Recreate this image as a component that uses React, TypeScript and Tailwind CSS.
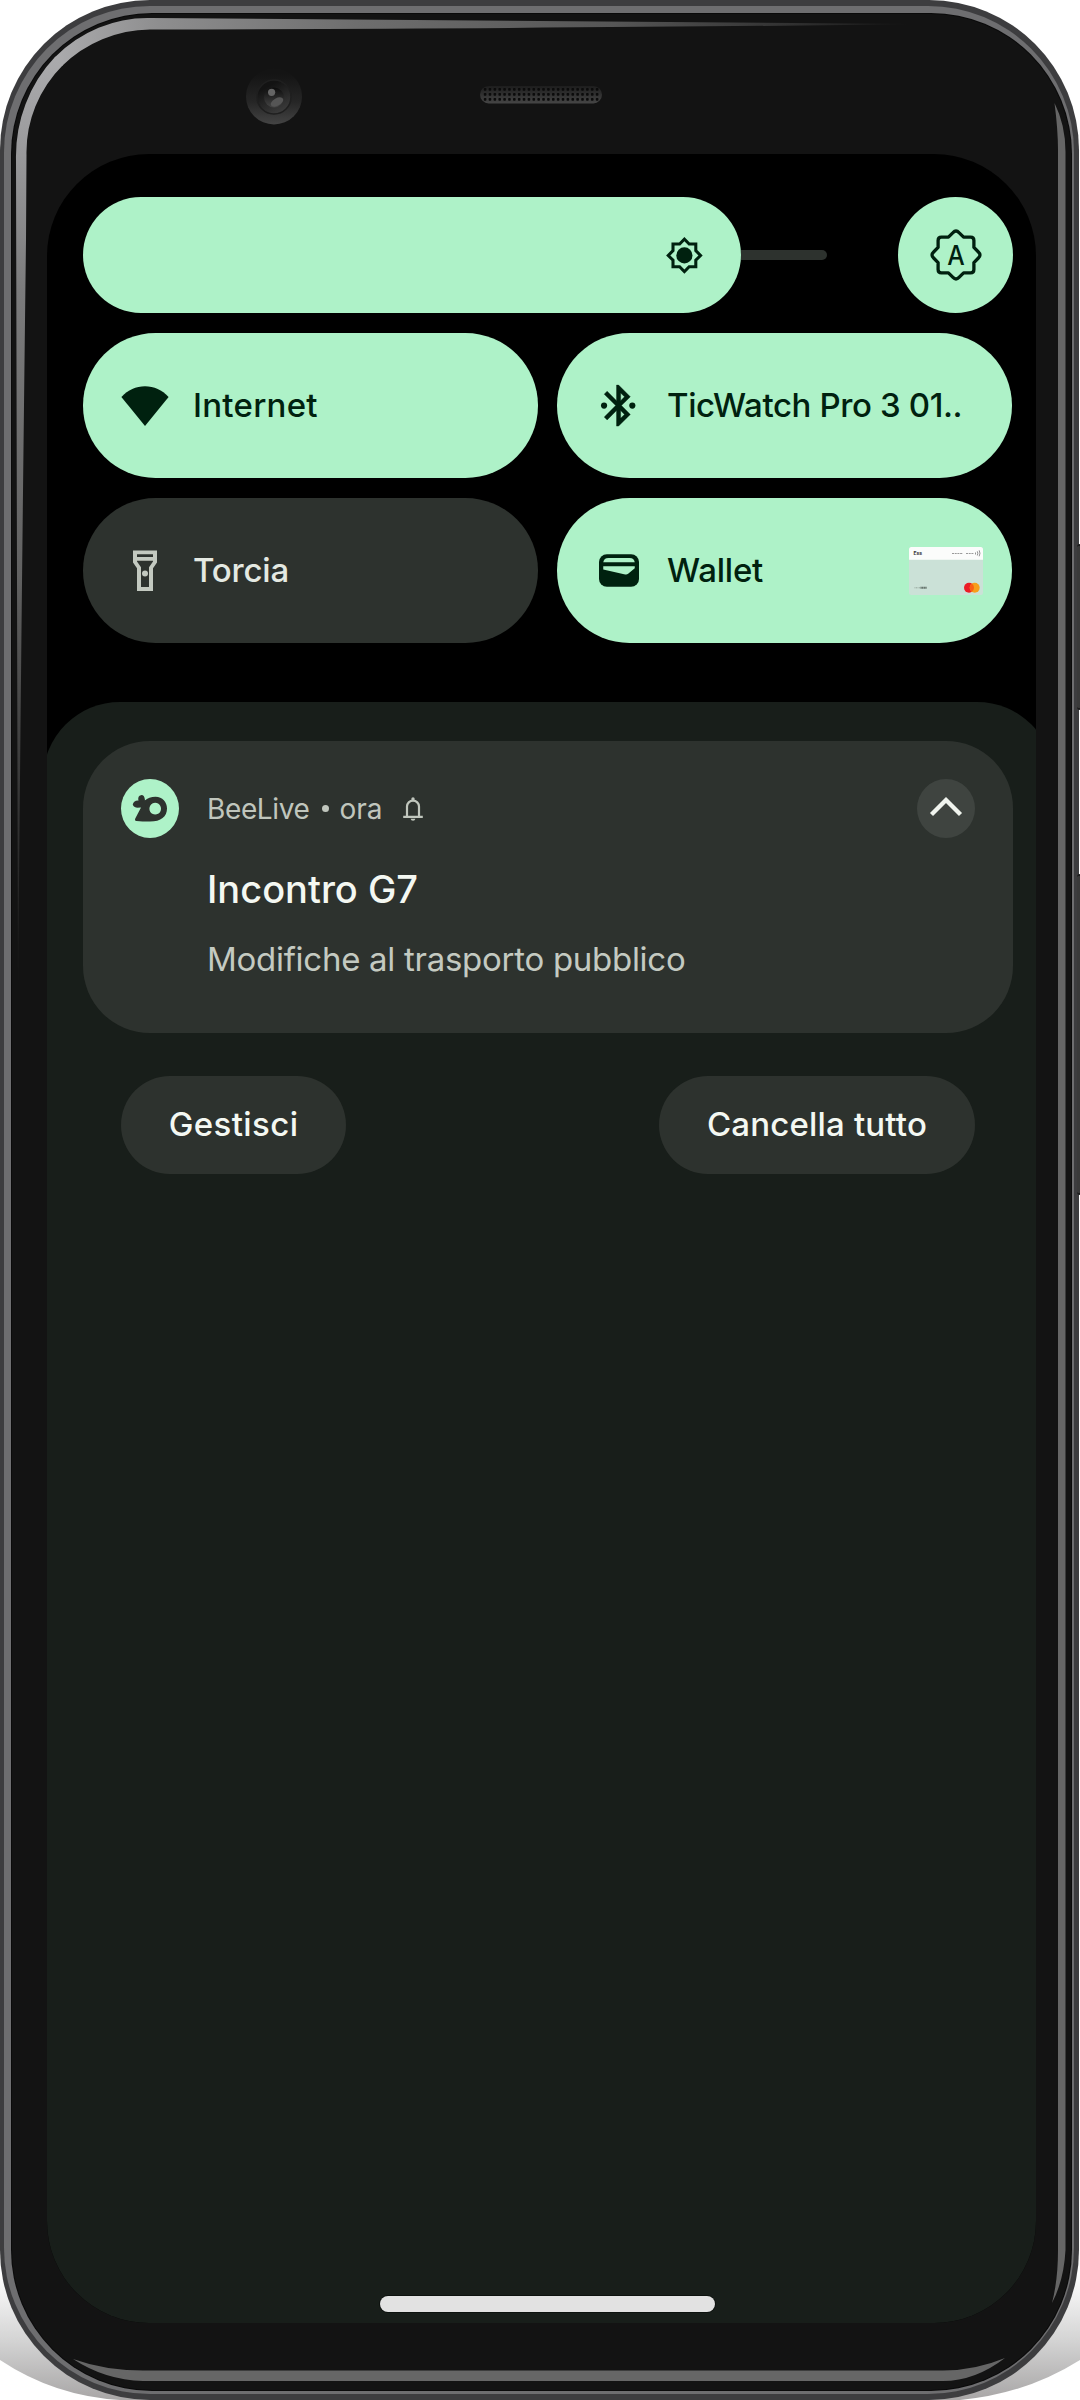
import React from "react";

function Glints() {
  return (
    <svg className="pointer-events-none absolute inset-0" width="1080" height="2400" viewBox="0 0 1080 2400" aria-hidden="true">
      <defs>
        <linearGradient id="glintTop" gradientUnits="userSpaceOnUse" x1="55" y1="0" x2="915" y2="0">
          <stop offset="0" stopColor="#ababad" />
          <stop offset="0.12" stopColor="#8e8e8f" />
          <stop offset="0.35" stopColor="#6e6e6e" />
          <stop offset="0.65" stopColor="#565656" />
          <stop offset="0.85" stopColor="#323232" />
          <stop offset="1" stopColor="#131313" />
        </linearGradient>
        <linearGradient id="glintLeft" gradientUnits="userSpaceOnUse" x1="0" y1="55" x2="0" y2="1000">
          <stop offset="0" stopColor="#ababad" />
          <stop offset="0.1" stopColor="#9a9a9c" />
          <stop offset="0.25" stopColor="#7b7b7c" />
          <stop offset="0.55" stopColor="#626262" />
          <stop offset="0.75" stopColor="#3c3c3c" />
          <stop offset="1" stopColor="#131313" />
        </linearGradient>
      </defs>
      <path d="M54.6 57.4A134 141 0 0 1 150 18L920 24Q640 28 150 29.5A126 124 0 0 0 62 66Z" fill="url(#glintTop)" />
      <path d="M55.4 56.6A134 141 0 0 0 16 160L18 1000Q21 640 26 240L26.5 155A126 124 0 0 1 63 65Z" fill="url(#glintLeft)" />
      <path d="M1054.5 103Q1065.5 125 1065.5 152V2250Q1064 2280 1052 2303Q1058 2280 1058 2250V150Q1058 130 1054.5 103Z" fill="#666666" />
      <path d="M73 2359Q105 2370.5 143 2370.5H943Q975 2370.5 1005 2358Q975 2381 943 2381H143Q105 2380 73 2359Z" fill="#666666" />
    </svg>
  );
}

function FloorShadow() {
  return (
    <svg className="absolute bottom-0 left-0" width="1080" height="150" viewBox="0 2250 1080 150" aria-hidden="true">
      <defs>
        <linearGradient id="floor" x1="0" y1="0" x2="0" y2="1">
          <stop offset="0.15" stopColor="#ffffff" />
          <stop offset="0.6" stopColor="#d4d4d4" />
          <stop offset="1" stopColor="#a8a6a6" />
        </linearGradient>
      </defs>
      <path d="M0 2250V2360Q54 2396 120 2400H960Q1026 2394 1080 2360V2250Z" fill="url(#floor)" />
    </svg>
  );
}

function Camera() {
  return (
    <svg width="56" height="57" viewBox="0 0 56 57" aria-hidden="true">
      <defs>
        <linearGradient id="lensOuter" x1="0" y1="0" x2="0" y2="1">
          <stop offset="0.1" stopColor="#141414" />
          <stop offset="0.6" stopColor="#262626" />
          <stop offset="1" stopColor="#444444" />
        </linearGradient>
        <linearGradient id="lensRing" x1="0.2" y1="0" x2="0.7" y2="1">
          <stop offset="0.2" stopColor="#131313" />
          <stop offset="1" stopColor="#3d3d3d" />
        </linearGradient>
        <linearGradient id="lensCore" x1="0" y1="0" x2="0" y2="1">
          <stop offset="0" stopColor="#0c0c0c" />
          <stop offset="1" stopColor="#454545" />
        </linearGradient>
      </defs>
      <circle cx="28" cy="28.5" r="28" fill="url(#lensOuter)" />
      <circle cx="28" cy="29" r="17" fill="url(#lensRing)" stroke="#1f1f1f" strokeWidth="1.5" />
      <circle cx="28" cy="29.5" r="10" fill="url(#lensCore)" />
      <ellipse cx="31" cy="34" rx="6.8" ry="3.8" fill="#555555" transform="rotate(-28 31 34)" />
      <circle cx="25.6" cy="24.3" r="3.6" fill="#656565" />
    </svg>
  );
}

function Speaker() {
  const columns = Array.from({ length: 24 }, (_, i) => i);
  const rows = [3.4, 8.4, 13.4];
  return (
    <svg width="122" height="18" viewBox="0 0 122 18" aria-hidden="true">
      <defs>
        <linearGradient id="grille" x1="0" y1="0" x2="0" y2="1">
          <stop offset="0" stopColor="#1d1d1d" />
          <stop offset="1" stopColor="#454545" />
        </linearGradient>
      </defs>
      <rect width="122" height="17.4" rx="8.7" fill="url(#grille)" />
      {rows.map((y) =>
        columns.map((c) => <rect key={`${y}-${c}`} x={3.8 + c * 4.87} y={y - 1.4} width="2.6" height="2.8" rx="0.8" fill="#0b0b0b" />),
      )}
    </svg>
  );
}

function BrightnessIcon() {
  return (
    <svg width="38.8" height="38.8" viewBox="0 0 24 24" fill="#00210f" aria-hidden="true">
      <path fillRule="evenodd" d="M20 8.69V4h-4.69L12 .69 8.69 4H4v4.69L.69 12 4 15.31V20h4.69L12 23.31 15.31 20H20v-4.69L23.31 12 20 8.69zm-1.9 5.87v3.54h-3.54L12 20.7l-2.56-2.6H5.900v-3.540L3.300 12l2.600-2.560V5.900h3.540L12 3.300l2.560 2.600h3.540v3.540l2.600 2.560-2.600 2.560z" />
      <circle cx="12" cy="12" r="5" />
    </svg>
  );
}

function AutoBrightnessIcon() {
  return (
    <svg width="54" height="54" viewBox="-27 -27 54 54" aria-hidden="true">
      <path
        d="M-3 -22.4Q0 -25.6 3 -22.4L7.6 -17.9H14.6Q17.9 -17.9 17.9 -14.6V-7.6L22.4 -3Q25.6 0 22.4 3L17.9 7.6V14.6Q17.9 17.9 14.6 17.9H7.6L3 22.4Q0 25.6 -3 22.4L-7.6 17.9H-14.6Q-17.9 17.9 -17.9 14.6V7.6L-22.4 3Q-25.6 0 -22.4 -3L-17.9 -7.6V-14.6Q-17.9 -17.9 -14.6 -17.9H-7.6Z"
        fill="none"
        stroke="#00210f"
        strokeWidth="3.3"
        strokeLinejoin="round"
      />
      <text x="0" y="9.6" textAnchor="middle" textLength="17.5" lengthAdjust="spacingAndGlyphs" className="fill-[#00210f] font-[Inter] text-[27px] font-medium">A</text>
    </svg>
  );
}

function WifiIcon() {
  return (
    <svg width="48" height="40" viewBox="0 0 48 40" fill="#00210f" aria-hidden="true">
      <path d="M0.4 10.9C7 4 15 0.2 24 0.2S41 4 47.6 10.9L24 40Z" />
    </svg>
  );
}

function BluetoothIcon() {
  return (
    <svg width="49.2" height="49.2" viewBox="0 0 24 24" fill="#00210f" aria-hidden="true">
      <path stroke="#00210f" strokeWidth="0.2" d="M17.71 7.71 12 2h-1v7.59L6.41 5 5 6.41 10.59 12 5 17.59 6.41 19 11 14.41V22h1l5.71-5.71L13.41 12l4.3-4.29zM13 5.83l1.88 1.88L13 9.59V5.83zm1.88 10.46L13 18.17v-3.76l1.88 1.88z" />
      <circle cx="4.9" cy="12" r="1.5" />
      <circle cx="18.7" cy="12" r="1.5" />
    </svg>
  );
}

function TorchIcon() {
  return (
    <svg width="24" height="41" viewBox="0 0 24 41" fill="#c3c9c0" aria-hidden="true">
      <path fillRule="evenodd" d="M0 .4h24v12l-4 5.800V41H4V18.200l-4-5.800ZM4 4.200V7h16V4.200ZM4 10.800v.6l4 5.800V37h8V17.200l4-5.800v-.6Z" />
      <circle cx="12" cy="23.500" r="3" />
    </svg>
  );
}

function WalletIcon() {
  return (
    <svg width="40" height="33" viewBox="0 0 40.500 33" aria-hidden="true">
      <rect width="40.500" height="33" rx="8" fill="#00210f" />
      <path d="M4.300 8.200Q5 3.900 9.500 3.900H31Q35.500 3.900 36.200 8.200Z" fill="#aef2c8" />
      <path d="M4.300 12.300H36.200V14.200L29.500 19.800Q28.200 20.900 26.500 20.500L4.300 15.400Z" fill="#aef2c8" />
    </svg>
  );
}

function PaymentCard() {
  return (
    <svg width="74" height="48" viewBox="0 0 74 48" aria-hidden="true">
      <rect width="74" height="48" rx="2.500" fill="#cbe1d7" />
      <path d="M0 12.700V2.500Q0 0 2.500 0H71.500Q74 0 74 2.500V12.700Z" fill="#fbfcfb" />
      <text x="4.500" y="7.800" className="fill-[#333333] font-[Inter] text-[5px] font-bold">Ess</text>
      <path d="M43 6.500H54M57 6.500H65" stroke="#9a9a9a" strokeWidth="1.200" strokeDasharray="2 0.700" />
      <path d="M66.500 5.500v2M68.300 4.300q1 2 0 4.200M70.200 3.300q1.500 3 0 6" stroke="#777777" strokeWidth="0.800" fill="none" />
      <path d="M5.500 40.800H11" stroke="#8fa097" strokeWidth="0.900" strokeDasharray="1 0.500" />
      <path d="M11.500 40.800H18" stroke="#5d6a63" strokeWidth="2" strokeDasharray="1.200 0.400" />
      <circle cx="60" cy="40.700" r="5" fill="#eb1c26" />
      <circle cx="65.700" cy="40.700" r="5" fill="#f79e1b" />
      <path d="M62.850 36.600a5 5 0 0 1 0 8.200a5 5 0 0 1 0-8.200Z" fill="#fa5f14" />
    </svg>
  );
}

function BeeIcon() {
  return (
    <svg width="58" height="59" viewBox="0 0 58 59" aria-hidden="true">
      <ellipse cx="29" cy="29.500" rx="29" ry="29.500" fill="#aef2c8" />
      <g fill="#2d322e">
        <path
          fillRule="evenodd"
          d="M19.500 29.500L23.500 22Q28 17.800 34.500 17.800C41.500 17.800 46 23 46 29.500C46 37.500 40 42.600 29 42.600Q21 42.600 15.500 42Q13.200 41.600 14.400 39.200ZM34.200 23.800a5.800 5.900 0 1 0 0.010 0Z"
        />
        <ellipse cx="16.800" cy="25.200" rx="4.900" ry="3.600" />
        <ellipse cx="20.600" cy="20.800" rx="3.300" ry="4.700" transform="rotate(-8 20.600 20.800)" />
        <path d="M18.500 23L25.500 21L24 30L18 28Z" />
      </g>
    </svg>
  );
}

function BellIcon() {
  return (
    <svg width="20" height="24" viewBox="0 0 20 24" aria-hidden="true">
      <path d="M0.200 19.800H19.800M4 19.500V9.600a6 6 0 0 1 12 0V19.500M10 3.600V1.800" fill="none" stroke="#c0c6bd" strokeWidth="2.200" />
      <circle cx="10" cy="1.900" r="1.700" fill="#c0c6bd" />
      <path d="M7.600 21.800h4.800q-.4 2-2.400 2t-2.400-2z" fill="#c0c6bd" />
    </svg>
  );
}

function Tile({ icon, label, on = true, extra }: { icon: React.ReactNode; label: React.ReactNode; on?: boolean; extra?: React.ReactNode }) {
  return (
    <div className={`flex h-[145px] items-center rounded-full pl-[36px] pr-[29px] text-[33px] font-medium leading-none ${on ? "bg-[#aef2c8] text-[#00210f]" : "bg-[#2d322e] text-[#e4e9e2]"}`}>
      <span className="flex w-[52px] shrink-0 justify-center">{icon}</span>
      <span className="ml-[22px] flex-1 whitespace-nowrap">{label}</span>
      {extra}
    </div>
  );
}

function QuickSettings() {
  return (
    <section className="pl-[36px] pr-[23px] pt-[43px]">
      <div className="flex h-[116px] items-center">
        <div className="flex h-full w-[658px] items-center justify-end rounded-full bg-[#aef2c8] pr-[37px]">
          <BrightnessIcon />
        </div>
        <div className="h-[10px] w-[86px] rounded-r-full bg-[#2d322e]" />
        <button className="ml-auto flex h-full w-[115px] items-center justify-center rounded-[50%] bg-[#aef2c8]">
          <AutoBrightnessIcon />
        </button>
      </div>
      <div className="mt-[20px] grid grid-cols-2 gap-x-[19px] gap-y-[20px] pr-px">
        <Tile icon={<WifiIcon />} label={<span className="tracking-[0.25px]">Internet</span>} />
        <Tile icon={<BluetoothIcon />} label={<span className="tracking-[-0.38px]">TicWatch Pro 3 01..</span>} />
        <Tile on={false} icon={<TorchIcon />} label={<span className="tracking-[-0.18px]">Torcia</span>} />
        <Tile icon={<WalletIcon />} label={<span className="tracking-[-0.2px]">Wallet</span>} extra={<PaymentCard />} />
      </div>
    </section>
  );
}

function Notification() {
  return (
    <article className="h-[292px] rounded-[67px] bg-[#2d322e] px-[38px] pt-[38px]">
      <header className="flex h-[59px] items-center text-[28px] leading-none text-[#c0c6bd]">
        <BeeIcon />
        <span className="ml-[28px] tracking-[-0.37px]">BeeLive</span>
        <span className="ml-[12px] size-[7px] rounded-full bg-[#c0c6bd]" />
        <span className="ml-[11px]">ora</span>
        <span className="ml-[20px]"><BellIcon /></span>
        <button className="ml-auto flex h-[59px] w-[58px] items-center justify-center rounded-[50%] bg-[#3f4440]">
          <svg width="34" height="22" viewBox="0 0 34 22" fill="none" stroke="#f0f4ee" strokeWidth="4.300" className="mb-[4px]" aria-hidden="true">
            <path d="M2.500 18.500L17 4L31.500 18.500" />
          </svg>
        </button>
      </header>
      <div className="ml-[86px]">
        <h2 className="mt-[28px] text-[38px] font-medium leading-[46px] text-[#f4f8f2]">Incontro G7</h2>
        <p className="mt-[27px] text-[33px] leading-[40px] tracking-[-0.28px] text-[#c4cac1]">Modifiche al trasporto pubblico</p>
      </div>
    </article>
  );
}

function Shade() {
  return (
    <section className="ml-[-4px] mr-[-18px] mt-[59px] flex-1 rounded-t-[77px] bg-[#181e1a] pl-[40px] pr-[41px] pt-[39px]">
      <Notification />
      <div className="mt-[43px] flex h-[98px] justify-between px-[38px] text-[33px] font-medium leading-none text-[#f4f8f2]">
        <button className="w-[225px] rounded-full bg-[#2d322e] pb-[2px] tracking-[0.4px]">Gestisci</button>
        <button className="w-[316px] rounded-full bg-[#2d322e] pb-[2px] tracking-[0.18px]">Cancella tutto</button>
      </div>
    </section>
  );
}

export default function App() {
  return (
    <div className="relative h-[2400px] w-[1080px] overflow-hidden bg-white font-[Inter,sans-serif]">
      <FloorShadow />
      <div className="relative h-[2400px] w-[1079.400px] rounded-[150px] bg-[#3d3d3f] pb-[6px] pl-[4px] pr-[5px] pt-[6px]">
        <div className="h-full rounded-[146px] bg-[#6e6e70] pb-[4px] pl-[8px] pr-[3.400px] pt-[8px]">
          <div className="flex h-full flex-col rounded-[140px] bg-[#131313] shadow-[0_0_0_1px_#0a0a0a]">
            <div className="flex h-[140px] shrink-0 items-start pl-[234px]">
              <span className="mt-[54px]"><Camera /></span>
              <span className="ml-[178px] mt-[72px]"><Speaker /></span>
            </div>
            <main className="ml-[35px] flex h-[2169px] w-[989px] flex-col overflow-hidden rounded-[102px] bg-black">
              <QuickSettings />
              <Shade />
            </main>
          </div>
        </div>
      </div>
      <Glints />
      <div className="absolute right-0 top-[544px] h-[166px] w-[3px] rounded-l-[3px] border-y-2 border-[#1c1c1c] bg-[#3a3a3a]" />
      <div className="absolute right-0 top-[874px] h-[321px] w-[3px] rounded-l-[3px] border-y-2 border-[#1c1c1c] bg-[#3a3a3a]" />
      <div className="absolute left-[380px] top-[2296px] h-[16px] w-[335px] rounded-full bg-[#e2e2e2] shadow-[0_0_0_1px_#0d120f]" />
    </div>
  );
}
